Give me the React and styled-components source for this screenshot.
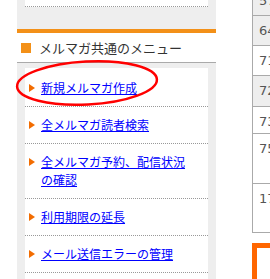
import React from 'react';
import styled, { createGlobalStyle } from 'styled-components';

const GlobalStyle = createGlobalStyle`
    html, body {
        margin: 0;
        padding: 0;
        background: #fff;
        overflow: hidden;
    }
    body {
        font-family: "Noto Sans CJK JP", "DejaVu Sans", sans-serif;
    }
`;

const Page = styled.div`
    display: flex;
    align-items: stretch;
    height: 279px;
    padding-left: 17px;
    overflow: hidden;
`;

const SideColumn = styled.div`
    display: flex;
    flex-direction: column;
    flex-shrink: 0;
    width: 199px;
    background: #eeeeee;
`;

const TopBox = styled.div`
    height: 6px;
    margin: 0 8px;
    background: #fff;
    border-bottom: 1px dotted #999;
`;

const MenuHeader = styled.div`
    display: flex;
    align-items: center;
    gap: 8px;
    height: 29px;
    margin-top: 22px;
    padding-left: 4px;
    background: #fff;
    border-top: 4px solid #f39018;
    border-bottom: 1px solid #aaa;
`;

const HeaderMark = styled.span`
    width: 10px;
    height: 10px;
    background: #f39018;
`;

const HeaderTitle = styled.h3`
    margin: 0;
    font-size: 13px;
    font-weight: normal;
    color: #333;
    line-height: 1;
`;

const MenuList = styled.ul`
    flex: 1;
    margin: 5px 8px 0;
    padding: 2px 0 0;
    list-style: none;
    background: #fff;
`;

const MenuItem = styled.li`
    display: flex;
    align-items: flex-start;
    gap: 6px;
    padding: 9px 12px 9px 4px;
    border-bottom: 1px dotted #999;
`;

const Arrow = styled.span`
    flex-shrink: 0;
    width: 0;
    height: 0;
    margin-top: 5px;
    border-left: 6px solid #f26c00;
    border-top: 4px solid transparent;
    border-bottom: 4px solid transparent;
`;

const MenuLink = styled.a`
    font-size: 12px;
    line-height: 18px;
    color: #0000ff;
    text-decoration: underline;
`;

const Highlight = styled.svg`
    position: absolute;
    left: 14px;
    top: 58px;
    pointer-events: none;
`;

const RightColumn = styled.div`
    flex-shrink: 0;
    width: 300px;
    margin-left: 36px;
`;

const Table = styled.div`
    margin-top: -15px;
    border-left: 1px solid #aaa;
    border-bottom: 1px solid #aaa;
`;

const Row = styled.div`
    box-sizing: border-box;
    height: ${props => props.height}px;
    padding: 6px 6px;
    border-top: 1px solid #aaa;
    background: ${props => props.shaded ? '#eeeeee' : '#fff'};
    font-family: "DejaVu Sans", sans-serif;
    font-size: 13px;
    line-height: 17px;
    color: #555;
`;

const Frame = styled.div`
    height: 80px;
    margin-top: 10px;
    border: 5px solid #ff6600;
`;

const menuItems = [
    '新規メルマガ作成',
    '全メルマガ読者検索',
    '全メルマガ予約、配信状況の確認',
    '利用期限の延長',
    'メール送信エラーの管理'
];

const rows = [
    { num: '57', height: 30, shaded: true },
    { num: '64', height: 30, shaded: true },
    { num: '71', height: 30, shaded: false },
    { num: '72', height: 31, shaded: true },
    { num: '73', height: 27, shaded: false },
    { num: '75', height: 50, shaded: false },
    { num: '17', height: 49, shaded: false }
];

export default function App() {
    return (
        <>
            <GlobalStyle />
            <Page>
                <SideColumn>
                    <TopBox />
                    <MenuHeader>
                        <HeaderMark />
                        <HeaderTitle>メルマガ共通のメニュー</HeaderTitle>
                    </MenuHeader>
                    <MenuList>
                        {menuItems.map(label => (
                            <MenuItem key={label}>
                                <Arrow />
                                <MenuLink href="#">{label}</MenuLink>
                            </MenuItem>
                        ))}
                    </MenuList>
                </SideColumn>
                <RightColumn>
                    <Table>
                        {rows.map(row => (
                            <Row key={row.num} height={row.height} shaded={row.shaded}>{row.num}</Row>
                        ))}
                    </Table>
                    <Frame />
                </RightColumn>
            </Page>
            <Highlight width="150" height="54" viewBox="0 0 150 54">
                <ellipse cx="73" cy="25" rx="70" ry="21.5" fill="none" stroke="#ff0000" strokeWidth="2.5" transform="rotate(-3 73 25)" />
            </Highlight>
        </>
    );
}
